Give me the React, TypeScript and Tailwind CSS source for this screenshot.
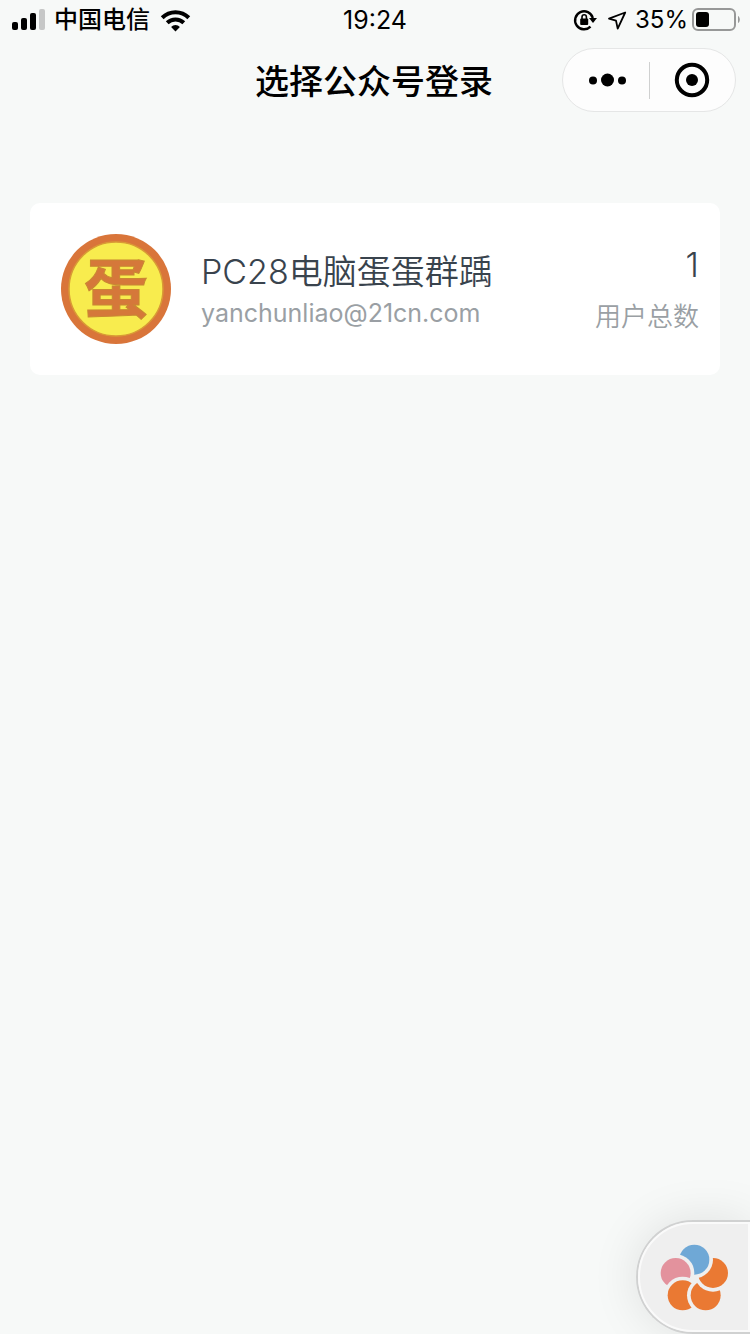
const petals = [
  { id: 'top', cx: 104, cy: 57, over: [48, 97], fill: '#6fa8d6' },
  { id: 'left', cx: 48, cy: 97, over: [69, 164], fill: '#e3929d' },
  { id: 'bottom-left', cx: 69, cy: 164, over: [138, 164], fill: '#ea7933' },
  { id: 'bottom-right', cx: 138, cy: 164, over: [160, 97], fill: '#ea7933' },
  { id: 'right', cx: 160, cy: 97, over: [104, 57], fill: '#ea7933' },
];

function StatusBar() {
  return (
    <div className="grid h-10 grid-cols-[1fr_auto_1fr] items-center px-[10px] text-2xl leading-10 text-black">
      <div className="flex items-center pl-[2px]">
        <svg className="mr-2 h-[22px] w-[34px]" viewBox="0 0 34 22" aria-label="Signal">
          <rect x="0" y="13" width="6" height="8" rx="2" />
          <rect x="9" y="9" width="6" height="12" rx="2" />
          <rect x="18" y="4" width="6" height="17" rx="2" />
          <rect x="27" y="0" width="6" height="21" rx="2" fill="#c6c7c7" />
        </svg>
        <span className="font-medium">中国电信</span>
        <svg className="ml-[10px] h-[23px] w-[31px]" viewBox="0 0 31 23" fill="none" stroke="#000" strokeWidth="4" aria-label="Wi-Fi">
          <path d="M2.2 8.8a19 19 0 0 1 26.6 0" />
          <path d="M7.2 13.8a12 12 0 0 1 16.6 0" />
          <path d="M15.5 22.5l-4.4-4.6a6.2 6.2 0 0 1 8.8 0z" fill="#000" stroke="none" />
        </svg>
      </div>
      <time className="text-center text-[25px] font-normal">19:24</time>
      <div className="flex items-center justify-end">
        <svg className="mr-[10px] h-6 w-6" viewBox="0 0 24 24" fill="none" stroke="#000" aria-label="Rotation lock">
          <path d="M17.5 18.6A9 9 0 1 1 19.8 10" strokeWidth="2.4" />
          <path d="M16 10h8l-4 5z" fill="#000" stroke="none" />
          <rect x="7.2" y="10.5" width="8" height="6.5" rx="1" fill="#000" stroke="none" />
          <path d="M9 11V9a2.2 2.2 0 0 1 4.4 0v2" strokeWidth="1.6" />
        </svg>
        <svg className="mr-2 h-5 w-5" viewBox="0 0 20 20" fill="none" stroke="#000" strokeWidth="1.8" strokeLinejoin="round" aria-label="Location">
          <path d="M18.200 2.500L2 8.600l7 2 1.700 8z" />
        </svg>
        <span className="mr-1 font-normal">35%</span>
        <svg className="h-6 w-12" viewBox="0 0 48 24" aria-label="Battery">
          <rect x="1" y="1" width="42" height="21" rx="5" fill="none" stroke="#979898" strokeWidth="2" />
          <rect x="4" y="4" width="13" height="15" rx="3" />
          <path d="M46 8c2.4 1 2.4 6 0 7z" fill="#979898" />
        </svg>
      </div>
    </div>
  );
}

function Header() {
  return (
    <header className="grid h-20 grid-cols-[1fr_auto_1fr] items-center pr-[14px]">
      <h1 className="col-start-2 pt-[3px] pl-3 text-[34px] leading-10 font-medium text-black">选择公众号登录</h1>
      <div className="flex h-16 w-[174px] items-center justify-self-end rounded-full border border-[#e5e6e6] bg-[#fdfdfd]">
        <button type="button" aria-label="More" className="flex flex-1 justify-center">
          <svg className="h-4 w-10" viewBox="0 0 40 16">
            <circle cx="7" cy="8.500" r="4" />
            <circle cx="21.500" cy="8" r="6.500" />
            <circle cx="36" cy="8.500" r="4" />
          </svg>
        </button>
        <span className="h-[37px] w-px bg-[#cfd0d0]" />
        <button type="button" aria-label="Close" className="flex flex-1 justify-center">
          <svg className="h-9 w-9" viewBox="0 0 36 36">
            <circle cx="18" cy="18" r="15.200" fill="none" stroke="#000" strokeWidth="4" />
            <circle cx="18" cy="18" r="6" />
          </svg>
        </button>
      </div>
    </header>
  );
}

function Avatar() {
  return (
    <svg className="h-[110px] w-[110px] shrink-0" viewBox="0 0 110 110">
      <circle cx="55" cy="55" r="55" fill="#d9753a" />
      <circle cx="55" cy="55" r="47" fill="#f8ec4e" stroke="#d99a35" strokeWidth="1.5" />
      <text
        x="55"
        y="78"
        textAnchor="middle"
        fill="#d5783a"
        stroke="#c98732"
        strokeWidth="1"
        className="font-['Noto_Sans_CJK_SC',sans-serif] text-[64px] font-bold"
      >
        蛋
      </text>
    </svg>
  );
}

function AccountCard() {
  return (
    <button type="button" className="flex w-full items-center rounded-[10px] bg-white py-[31px] pr-[21px] pl-[31px] text-left">
      <Avatar />
      <div className="ml-[30px] min-w-0 flex-1 pt-[5px]">
        <div className="text-[34px] leading-[42px] font-[350] text-[#39434d]">PC28电脑蛋蛋群踽</div>
        <div className="text-[25px] leading-10 font-normal text-[#9a9fa4]">yanchunliao@21cn.com</div>
      </div>
      <div className="pt-[3px] text-right">
        <div className="text-[34px] leading-[52px] font-[350] text-[#39434d]">1</div>
        <div className="text-[26px] leading-[52px] font-[350] text-[#9a9fa4]">用户总数</div>
      </div>
    </button>
  );
}

function FloatingButton() {
  return (
    <button
      type="button"
      aria-label="Menu"
      className="fixed right-0 bottom-0 rounded-l-full border-y-2 border-l-2 border-[#d0d1d1] bg-[#efefef] shadow-[0_0_48px_rgba(0,0,0,0.1)]"
    >
      <span className="flex h-[110px] w-28 items-center justify-center rounded-l-full border-2 border-[#fafafa]">
        <svg className="h-[70px] w-[70px]" viewBox="-2 4 210 210">
          {petals.map((p) => (
            <g key={p.id}>
              <mask id={p.id} maskUnits="userSpaceOnUse" x="0" y="0" width="210" height="215">
                <rect width="210" height="215" fill="#fff" />
                <circle cx={p.over[0]} cy={p.over[1]} r="56" fill="#000" />
              </mask>
              <circle cx={p.cx} cy={p.cy} r="45" fill={p.fill} mask={`url(#${p.id})`} />
            </g>
          ))}
        </svg>
      </span>
    </button>
  );
}

export default function App() {
  return (
    <div className="min-h-screen bg-[#f7f9f8] font-['Inter','Noto_Sans_CJK_SC',sans-serif]">
      <StatusBar />
      <Header />
      <main className="px-[30px] pt-[83px]">
        <AccountCard />
      </main>
      <FloatingButton />
    </div>
  );
}
